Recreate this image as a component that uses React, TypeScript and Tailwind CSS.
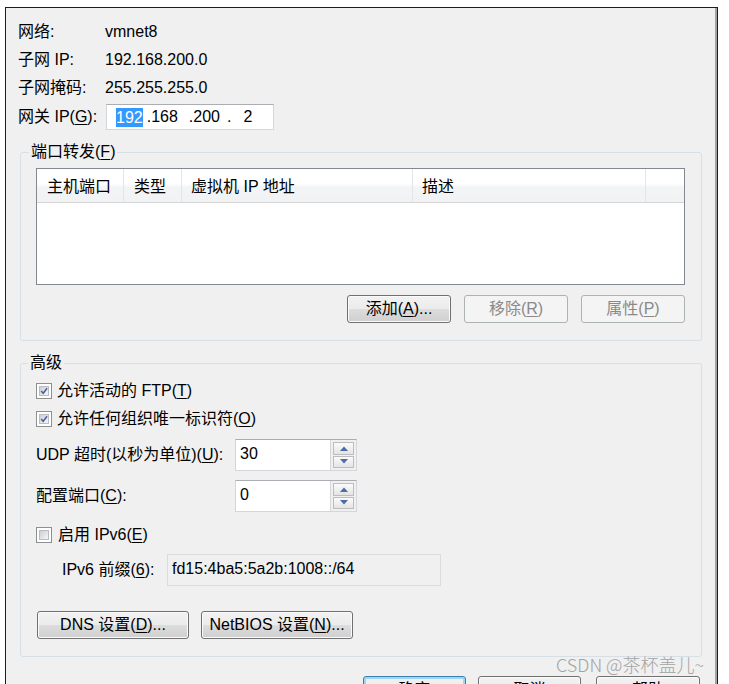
import type { ReactNode } from "react";

const U = ({ children }: { children: ReactNode }) => (
    <span className="underline underline-offset-[2px] decoration-1">{children}</span>
);

const WinButton = ({
    children,
    width,
    disabled = false,
    focused = false,
}: {
    children: ReactNode;
    width: string;
    disabled?: boolean;
    focused?: boolean;
}) => {
    let look =
        "border-[#707070] bg-[linear-gradient(#f2f2f2_0%,#ebebeb_50%,#dddddd_51%,#cfcfcf_100%)] shadow-[inset_0_0_0_1px_#fbfbfb]";
    if (disabled) look = "border-[#adb2b5] bg-[#f4f4f4] text-[#8a8a8a]";
    if (focused)
        look =
            "border-[#3c7fb1] bg-[linear-gradient(#f2f2f2_0%,#ebebeb_50%,#dddddd_51%,#cfcfcf_100%)] shadow-[inset_0_0_0_2px_#9fd5f2]";
    return (
        <div
            className={`${width} h-[28px] shrink-0 flex items-center justify-center rounded-[3px] border ${look}`}
        >
            {children}
        </div>
    );
};

const CheckBox = ({ checked }: { checked: boolean }) => (
    <div className="w-[16px] h-[16px] shrink-0 border border-[#8e8f8f] bg-white p-[2px]">
        <div className="w-full h-full border border-[#b9bdc3] bg-[linear-gradient(135deg,#cbcfd5_0%,#f6f6f6_100%)] flex items-center justify-center">
            {checked && (
                <svg width="10" height="10" viewBox="0 0 10 10">
                    <path
                        d="M1.5 5 L4 7.8 L8.8 1.6"
                        fill="none"
                        stroke="#4a5f97"
                        strokeWidth="1.9"
                    />
                </svg>
            )}
        </div>
    </div>
);

const SpinBox = ({ value }: { value: string }) => (
    <div className="w-[122px] h-[32px] shrink-0 flex border border-[#d3d6db] border-t-[#abadb3] bg-white">
        <div className="flex-1 pl-[4px] pt-[4px] leading-[20px]">{value}</div>
        <div className="w-[26px] flex flex-col gap-[1px] p-[2px] border-l border-[#d6d6d6] bg-[#f0f0f0]">
            <div className="flex-1 flex items-center justify-center border border-[#bdbdbd] bg-[linear-gradient(#fbfbfb,#e4e4e4)]">
                <svg width="8" height="5" viewBox="0 0 8 5">
                    <polygon points="0,5 4,0.5 8,5" fill="#4e6aa8" />
                </svg>
            </div>
            <div className="flex-1 flex items-center justify-center border border-[#bdbdbd] bg-[linear-gradient(#fbfbfb,#e4e4e4)]">
                <svg width="8" height="5" viewBox="0 0 8 5">
                    <polygon points="0,0 8,0 4,4.5" fill="#4e6aa8" />
                </svg>
            </div>
        </div>
    </div>
);

const App = () => {
    return (
        <div className="relative w-[729px] h-[684px] overflow-hidden bg-white pt-[7px] pl-[5px] font-['Liberation_Sans','Noto_Sans_CJK_SC',sans-serif] text-[16px] text-black">
            <div className="w-[713px] h-[720px] border-t border-l border-r border-[#1c1c1c] bg-[#f0f0f0] shadow-[inset_-2px_0_0_#a3a3a3]">
                {/* network info */}
                <div className="pt-[10px] pl-[12px]">
                    <div className="flex h-[28px] items-center">
                        <div className="w-[87px]">网络:</div>
                        <div>vmnet8</div>
                    </div>
                    <div className="flex h-[28px] items-center">
                        <div className="w-[87px]">子网 IP:</div>
                        <div>192.168.200.0</div>
                    </div>
                    <div className="flex h-[27px] items-center">
                        <div className="w-[87px]">子网掩码:</div>
                        <div>255.255.255.0</div>
                    </div>
                    <div className="flex mt-[3px] h-[26px] items-center">
                        <div className="w-[88px]">
                            网关 IP(<U>G</U>):
                        </div>
                        <div className="w-[168px] h-[26px] flex items-center pl-[9px] border border-[#d3d6db] border-t-[#abadb3] bg-white">
                            <span className="bg-[#3399ff] text-white leading-[19px]">192</span>
                            <span className="ml-[4px]">.168</span>
                            <span className="ml-[11px]">.200</span>
                            <span className="ml-[7px]">.</span>
                            <span className="ml-[12px]">2</span>
                        </div>
                    </div>
                </div>

                {/* port forwarding */}
                <fieldset className="mt-[12px] ml-[14px] mr-[15px] border border-[#d5dfe5] rounded-[3px]">
                    <legend className="ml-[8px] px-[2px] leading-[20px]">
                        端口转发(<U>F</U>)
                    </legend>
                    <div className="pt-[6px] pl-[15px] pr-[16px] pb-[17px]">
                        <div className="h-[117px] border border-[#828790] bg-white">
                            <div className="flex h-[34px] border-b border-[#d5d5d5] bg-[linear-gradient(#ffffff_0%,#ffffff_45%,#f3f4f6_55%,#f1f2f4_100%)]">
                                <div className="w-[87px] border-r border-[#e3e5e8] pl-[10px] pt-[2px] flex items-center">
                                    主机端口
                                </div>
                                <div className="w-[58px] border-r border-[#e3e5e8] pl-[10px] pt-[2px] flex items-center">
                                    类型
                                </div>
                                <div className="w-[231px] border-r border-[#e3e5e8] pl-[9px] pt-[2px] flex items-center">
                                    虚拟机 IP 地址
                                </div>
                                <div className="w-[233px] border-r border-[#e3e5e8] pl-[9px] pt-[2px] flex items-center">
                                    描述
                                </div>
                                <div className="flex-1" />
                            </div>
                        </div>
                        <div className="mt-[10px] flex justify-end gap-[13px]">
                            <WinButton width="w-[104px]">
                                添加(<U>A</U>)...
                            </WinButton>
                            <WinButton width="w-[104px]" disabled>
                                移除(<U>R</U>)
                            </WinButton>
                            <WinButton width="w-[104px]" disabled>
                                属性(<U>P</U>)
                            </WinButton>
                        </div>
                    </div>
                </fieldset>

                {/* advanced */}
                <fieldset className="mt-[12px] ml-[14px] mr-[15px] border border-[#d5dfe5] rounded-[3px]">
                    <legend className="ml-[7px] px-[2px] leading-[20px]">高级</legend>
                    <div className="pt-[4px] px-[15px] pb-[17px]">
                        <div className="flex h-[28px] items-center gap-[5px]">
                            <CheckBox checked />
                            <span>
                                允许活动的 FTP(<U>T</U>)
                            </span>
                        </div>
                        <div className="flex h-[28px] items-center gap-[5px]">
                            <CheckBox checked />
                            <span>
                                允许任何组织唯一标识符(<U>O</U>)
                            </span>
                        </div>
                        <div className="flex mt-[6px] h-[32px] items-center">
                            <div className="w-[199px]">
                                UDP 超时(以秒为单位)(<U>U</U>):
                            </div>
                            <SpinBox value="30" />
                        </div>
                        <div className="flex mt-[9px] h-[32px] items-center">
                            <div className="w-[199px]">
                                配置端口(<U>C</U>):
                            </div>
                            <SpinBox value="0" />
                        </div>
                        <div className="flex mt-[9px] h-[28px] items-center gap-[6px]">
                            <CheckBox checked={false} />
                            <span>
                                启用 IPv6(<U>E</U>)
                            </span>
                        </div>
                        <div className="flex mt-[5px] h-[32px] items-center pl-[26px]">
                            <div className="w-[105px]">
                                IPv6 前缀(<U>6</U>):
                            </div>
                            <div className="w-[274px] h-[32px] pl-[4px] pt-[4px] leading-[20px] border border-[#d9dbdf] bg-[#f0f0f0]">
                                fd15:4ba5:5a2b:1008::/64
                            </div>
                        </div>
                        <div className="flex mt-[25px] ml-[1px] gap-[12px]">
                            <WinButton width="w-[152px]">
                                DNS 设置(<U>D</U>)...
                            </WinButton>
                            <WinButton width="w-[152px]">
                                NetBIOS 设置(<U>N</U>)...
                            </WinButton>
                        </div>
                    </div>
                </fieldset>

                {/* dialog buttons, cut by the bottom of the screenshot */}
                <div className="mt-[19px] flex justify-end pr-[17px]">
                    <WinButton width="w-[103px]" focused>
                        确定
                    </WinButton>
                    <div className="ml-[12px]">
                        <WinButton width="w-[103px]">取消</WinButton>
                    </div>
                    <div className="ml-[15px]">
                        <WinButton width="w-[104px]">帮助</WinButton>
                    </div>
                </div>
            </div>

            <div className="absolute left-[556px] top-[652px] leading-[24px] text-[18px] text-[#a3a3a3] font-['Noto_Sans_CJK_SC',sans-serif] font-light">
                CSDN @茶杯盖儿~
            </div>
        </div>
    );
};

export default App;
